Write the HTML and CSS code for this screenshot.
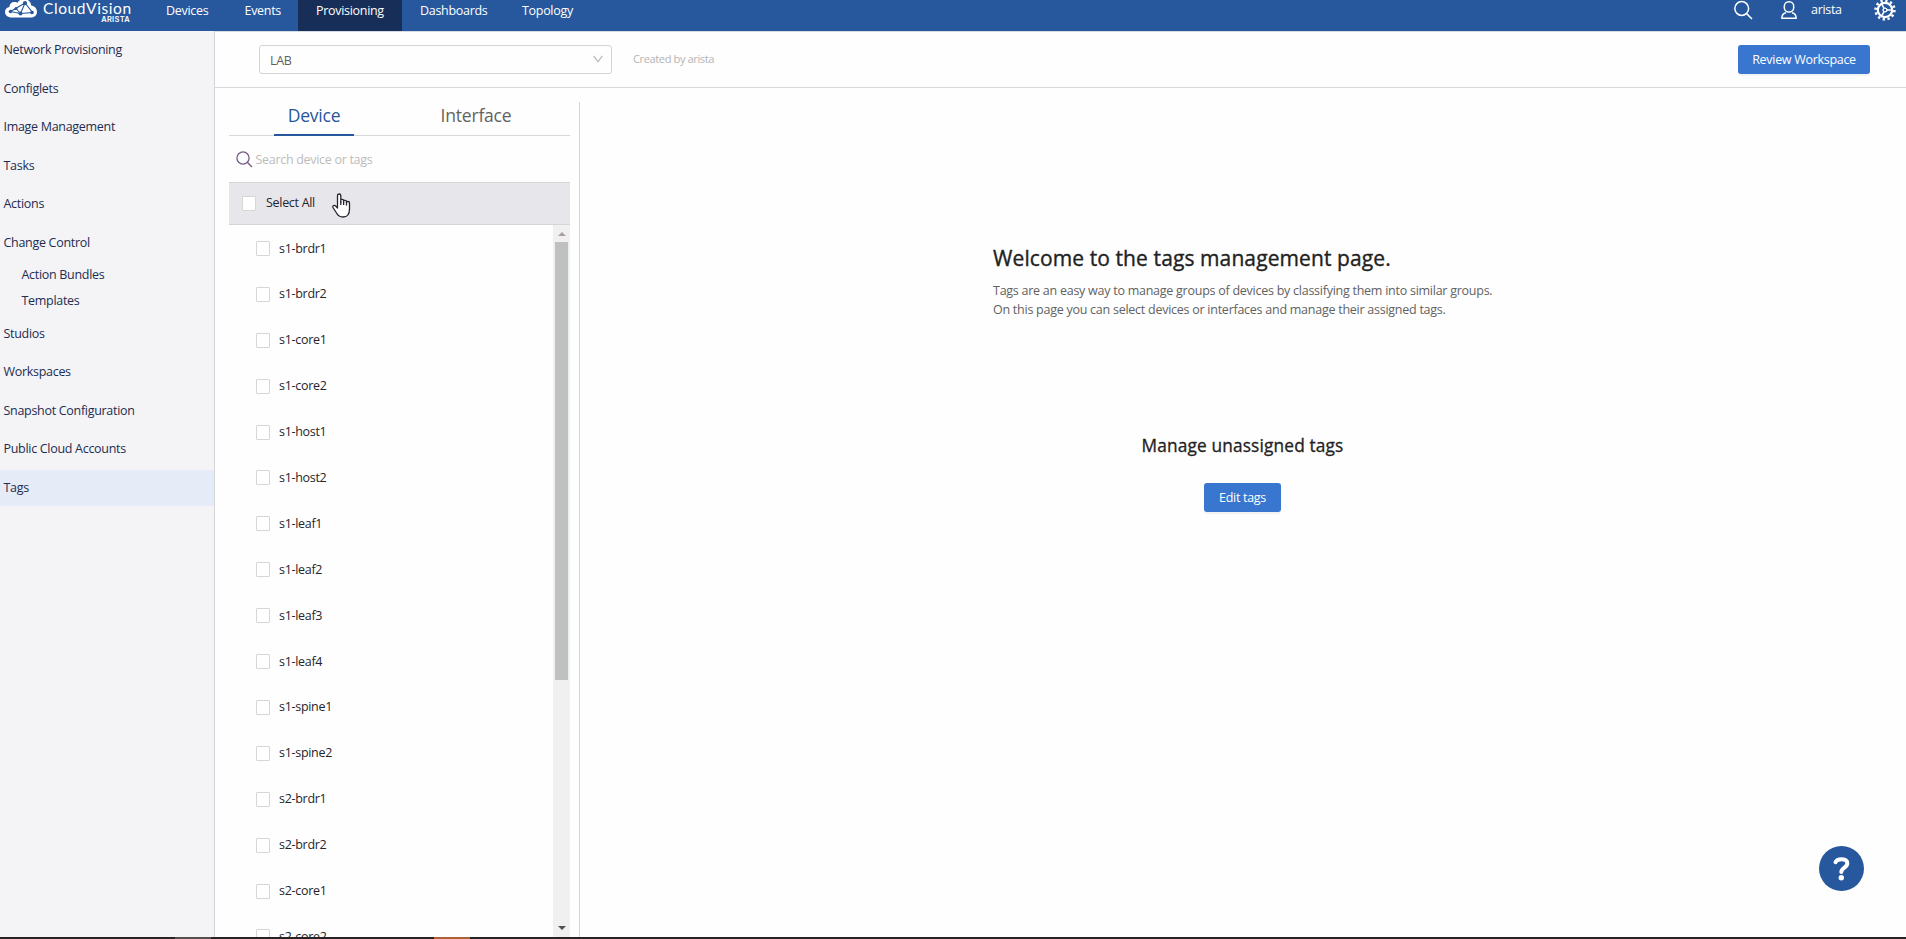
FILE: index.html
```html
<!DOCTYPE html>
<html lang="en">
<head>
<meta charset="utf-8">
<title>CloudVision - Tags</title>
<link rel="stylesheet" href="styles.css">
</head>
<body>
<div class="app">
  <header class="topbar">
    <div class="brand">
      <svg class="cloud" width="34" height="19" viewBox="0 0 34 19">
        <path fill="#fff" d="M7 17.500C2.500 17.500 0 15 0 12 0 9.200 2 7.400 4.500 7 4.500 4 6.500 2 9.500 2 10.800 2 12 2.500 12.500 2.800 13.500 .5 16-1 19-1 23-1 26 2 26.200 5.500 29.500 6 32 8.500 32 11.700 32 15 29.500 17.500 26 17.500Z"/>
        <g stroke="#27579c" stroke-width="1.100" fill="none"><path d="M5.500 11.500 15.500 13.500 27.500 12.500 20 3 5.500 11.500M20 3 15.500 13.500M11 8.500 15.500 13.500"/></g>
        <g fill="#27579c"><circle cx="5.500" cy="11.500" r="1.800"/><circle cx="15.500" cy="13.500" r="2"/><circle cx="27" cy="12.500" r="1.800"/><circle cx="20" cy="3" r="2.100"/><circle cx="11" cy="8.500" r="1.500"/></g>
      </svg>
      <div class="wordmark"><span class="product">CloudVision</span><span class="company">ARISTA</span></div>
    </div>
    <nav class="tabs">
      <a class="w-dev">Devices</a><a class="w-ev">Events</a><a class="w-prov current">Provisioning</a><a class="w-dash">Dashboards</a><a class="w-top">Topology</a>
    </nav>
    <div class="tools">
      <svg class="i-search" width="19" height="20" viewBox="0 0 19 20" fill="none" stroke="#fff" stroke-width="1.500"><circle cx="7.700" cy="8.500" r="6.900"/><path d="M12.600 13.600 18 19"/></svg>
      <svg class="i-user" width="16" height="20" viewBox="0 0 16 20" fill="none" stroke="#fff" stroke-width="1.500"><rect x="3.300" y="1.800" width="9.400" height="10.200" rx="4.500"/><path d="M5 12.800C2.200 13.300.9 14.800.9 18.200H15.100C15.100 14.800 13.800 13.300 11 12.800"/></svg>
      <span class="username">arista</span>
      <svg class="i-gear" width="22" height="22" viewBox="-11 -11 22 22" fill="none" stroke="#fff"><circle r="7.200" stroke-width="2.200"/><circle r="9.400" stroke-width="2.600" stroke-dasharray="2.300 2.622"/><circle r="1.900" stroke-width="1.400"/><path stroke-width="1.500" d="M2 0H7M-1 -1.800-3.500-6M-1 1.800-3.500 6"/></svg>
    </div>
  </header>
  <div class="body">
    <aside class="sidebar">
      <a>Network Provisioning</a><a>Configlets</a><a>Image Management</a><a>Tasks</a><a>Actions</a><a>Change Control</a>
      <div class="sub"><a>Action Bundles</a><a>Templates</a></div>
      <a>Studios</a><a>Workspaces</a><a>Snapshot Configuration</a><a>Public Cloud Accounts</a><a class="selected">Tags</a>
    </aside>
    <main class="main">
      <div class="workspace">
        <div class="select"><span>LAB</span><svg width="10" height="8" viewBox="0 0 10 8" fill="none" stroke="#b8b8b8" stroke-width="1.200"><path d="M.7.800 5 6.800 9.300.8"/></svg></div>
        <span class="created">Created by arista</span>
        <button class="btn review">Review Workspace</button>
      </div>
      <div class="content">
        <section class="picker">
          <div class="switch"><div class="half on"><span>Device</span></div><div class="half"><span>Interface</span></div></div>
          <div class="search"><svg width="17" height="17" viewBox="0 0 17 17" fill="none" stroke="#755b83" stroke-width="1.300"><circle cx="7" cy="7" r="6.100"/><path d="M11.300 11.300 16 16"/></svg><span>Search device or tags</span></div>
          <div class="all"><i class="box"></i><span>Select All</span>
            <svg class="pointer" width="19" height="25" viewBox="0 0 19 25" fill="#fff" stroke="#28242e" stroke-width="1.300" stroke-linejoin="round"><path d="M5.500 15V2.500C5.500.5 8.800.5 8.800 2.500V9 7.500C8.800 5.800 11.600 6 11.600 7.500V9.500 8.300C11.600 6.800 14.500 7 14.500 8.500V10 9.500C14.500 8 17.500 8.200 17.500 9.800V16C17.500 21 15 24 11 24 7.500 24 5.800 22.500 4.500 20L1 14.500C.2 12.500 2.500 11.700 3.700 13Z"/><path d="M8.800 8.500V12M11.600 9V12M14.500 9.500V12.500"/></svg>
          </div>
          <div class="list">
            <div class="rows">
              <div><i class="box"></i>s1-brdr1</div><div><i class="box"></i>s1-brdr2</div><div><i class="box"></i>s1-core1</div><div><i class="box"></i>s1-core2</div><div><i class="box"></i>s1-host1</div><div><i class="box"></i>s1-host2</div><div><i class="box"></i>s1-leaf1</div><div><i class="box"></i>s1-leaf2</div><div><i class="box"></i>s1-leaf3</div><div><i class="box"></i>s1-leaf4</div><div><i class="box"></i>s1-spine1</div><div><i class="box"></i>s1-spine2</div><div><i class="box"></i>s2-brdr1</div><div><i class="box"></i>s2-brdr2</div><div><i class="box"></i>s2-core1</div><div><i class="box"></i>s2-core2</div>
            </div>
            <div class="scroll"><b class="up"></b><b class="thumb"></b><b class="down"></b></div>
          </div>
        </section>
        <section class="welcome">
          <div class="intro">
            <h1>Welcome to the tags management page.</h1>
            <p>Tags are an easy way to manage groups of devices by classifying them into similar groups.</p>
            <p>On this page you can select devices or interfaces and manage their assigned tags.</p>
          </div>
          <h2>Manage unassigned tags</h2>
          <button class="btn edit">Edit tags</button>
        </section>
      </div>
    </main>
  </div>
  <footer class="strip"><i class="seg gray"></i><i class="seg orange"></i></footer>
  <div class="help"><svg width="45" height="45" viewBox="0 0 45 45"><circle cx="22.500" cy="22.500" r="22.500" fill="#27579c"/><path d="M16.500 16.200C18 12.400 28.300 11.500 28.300 17.500 28.300 21.700 22.300 21.500 22.300 26" fill="none" stroke="#fff" stroke-width="4" stroke-linecap="round"/><circle cx="22.300" cy="31.800" r="2.700" fill="#fff"/></svg></div>
</div>
</body>
</html>
```
FILE: styles.css
```css
* { box-sizing: border-box; }
body { margin: 0; overflow: hidden; font: 12.5px/18px "Open Sans", "Noto Sans", sans-serif; letter-spacing: -0.3px; color: #25252b; background: #fefefe; }
h1, h2, p { margin: 0; }
span, a, h1, h2, p { white-space: nowrap; }
.app { height: 939px; display: flex; flex-direction: column; overflow: hidden; position: relative; }

.topbar { height: 31px; flex: none; display: flex; background: #27579c; color: #fff; }
.brand { width: 148px; padding-left: 5px; display: flex; }
.cloud { flex: none; }
.wordmark { width: 88px; margin-left: 4px; display: flex; flex-direction: column; }
.product { font: 400 15.500px/16px Lato, sans-serif; letter-spacing: 0.6px; }
.company { font: 600 7.500px/7px Inter, sans-serif; letter-spacing: 0.3px; align-self: flex-end; margin-right: 1px; }
.tabs { display: flex; }
.tabs a { padding: 0 18px; height: 31px; line-height: 21px; }
.w-dev { width: 78.500px; }
.w-ev { width: 71.500px; }
.w-prov { width: 104px; }
.w-dash { width: 102px; }
.w-top { width: 90px; }
.current { background: #172f58; }
.tools { margin-left: auto; padding-right: 10px; display: flex; }
.i-user { margin-left: 28px; }
.username { margin-left: 14px; width: 31px; line-height: 19px; }
.i-gear { margin: -1px 0 0 32px; }

.body { flex: 1; min-height: 0; display: flex; }
.sidebar { width: 215px; flex: none; border-right: 1px solid #d5d5d8; background: #f4f4f7; color: #1e2c50; display: flex; flex-direction: column; gap: 2.600px; padding-top: 1px; }
.sidebar a { height: 36px; line-height: 36px; padding-left: 3.500px; flex: none; }
.sub { margin: -1.500px 0 -1px; display: flex; flex-direction: column; }
.sidebar .sub a { height: 26px; line-height: 26px; padding-left: 21.500px; }
.sidebar .selected { background: #e5ebf7; }

.main { flex: 1; min-width: 0; display: flex; flex-direction: column; }
.workspace { height: 57px; flex: none; border-top: 1px solid #d5dbe4; border-bottom: 1px solid #d9d9dc; display: flex; align-items: flex-start; padding: 13px 36px 0 44px; }
.select { width: 353px; height: 29px; border: 1px solid #d4d4d6; border-radius: 3px; display: flex; justify-content: space-between; align-items: center; padding: 2px 8px 0 10px; color: #606060; }
.select svg { margin-top: -3px; }
.created { margin: 5px 0 0 21px; font-size: 11.200px; letter-spacing: -0.450px; color: #b5b5b5; }
.btn { border: 0; border-radius: 3px; height: 29px; padding: 0; background: #3876cf; color: #fff; font: inherit; letter-spacing: inherit; box-shadow: 0 2px 0 #f3f3f3; }
.review { width: 132px; margin-left: auto; }

.content { flex: 1; min-height: 0; display: flex; padding: 14px 0 0 14px; }
.picker { width: 351px; flex: none; border-right: 1px solid #d5d5d5; padding-right: 9px; display: flex; flex-direction: column; }
.switch { height: 34px; flex: none; display: flex; border-bottom: 1px solid #d9d9d9; font-size: 17.500px; letter-spacing: -0.2px; line-height: 27px; color: #626262; }
.half { height: 34px; width: 80px; margin-left: 45px; text-align: center; }
.half + .half { margin-left: 82px; }
.on { color: #27579c; border-bottom: 2px solid #27579c; }
.search { height: 46px; flex: none; padding: 0 0 0 7px; display: flex; align-items: center; gap: 2.500px; color: #bcbcbc; }
.search span { padding-top: 2px; }
.all { height: 43px; flex: none; border: solid #d5d5d8; border-width: 1px 0; background: #e7e6eb; display: flex; align-items: center; gap: 10px; padding-left: 13px; position: relative; }
.all span { padding-bottom: 2px; }
.all .box { margin-bottom: 1px; }
.box { width: 14px; height: 15px; border: 1px solid #d6d6d6; border-radius: 1px; background: #fff; flex: none; }
.pointer { position: absolute; left: 103px; top: 10px; }
.list { flex: 1; min-height: 0; display: flex; }
.rows { flex: 1; overflow: hidden; padding-top: 0.6px; }
.rows div { height: 45.900px; padding-left: 27px; display: flex; align-items: center; gap: 9px; }
.scroll { width: 17px; background: #f0f0f0; display: flex; flex-direction: column; align-items: center; }
.up { border: solid transparent; border-width: 0 4px 4px; border-bottom-color: #a99da1; margin: 7px 0 6px; }
.thumb { width: 13px; height: 438px; background: #bfc1c0; }
.down { border: solid transparent; border-width: 4px 4px 0; border-top-color: #555050; margin: auto 0 7px; }

.welcome { flex: 1; display: flex; flex-direction: column; align-items: center; padding: 142px 1px 0 0; }
.intro { width: 499px; }
h1 { font-size: 21px; font-weight: 400; line-height: 28px; letter-spacing: 0.1px; color: #222; margin-bottom: 9px; -webkit-text-stroke: 0.35px #222; }
p { line-height: 19px; letter-spacing: -0.255px; color: #626262; }
h2 { font-size: 17.300px; font-weight: 400; line-height: 24px; letter-spacing: 0.150px; margin-top: 114.500px; color: #222; -webkit-text-stroke: 0.3px #222; }
.edit { width: 77px; margin-top: 25.500px; }

.strip { height: 2px; flex: none; background: #272324; display: flex; }
.seg { width: 36px; height: 2px; }
.gray { margin-left: 175px; background: #594e50; }
.orange { margin-left: 223px; background: #ab6239; }
.help { position: absolute; left: 1819px; top: 846px; width: 45px; height: 45px; }
```
